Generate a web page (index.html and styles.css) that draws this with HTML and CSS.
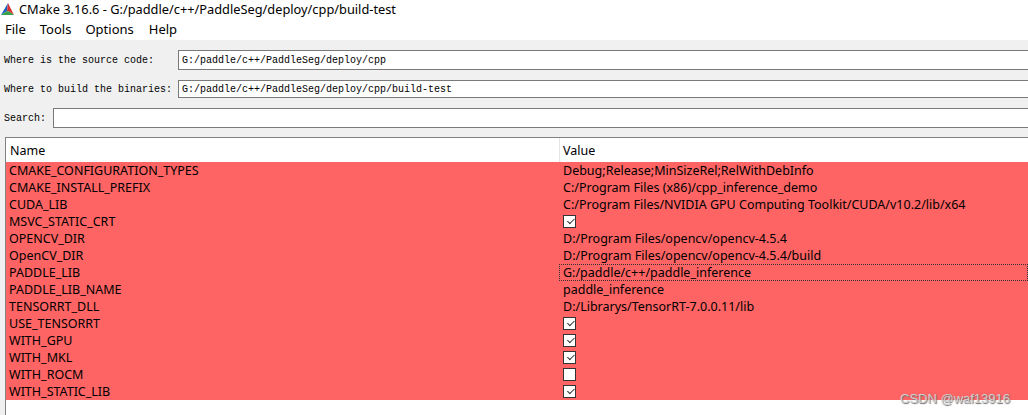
FILE: index.html
```html
<!DOCTYPE html>
<html>
<head>
<meta charset="utf-8">
<link rel="stylesheet" href="styles.css">
</head>
<body>
<div class="window">
  <div class="titlebar">
    <svg class="logo" width="14" height="13" viewBox="0 0 14 13">
      <polygon points="7,0 0,12 6,8" fill="#1f5fbf"/>
      <polygon points="7,0 6,8 9,9 13,12" fill="#d8322e"/>
      <polygon points="0,12 6,8 9,9 13,12" fill="#3aa04a"/>
    </svg>
    <span class="title">CMake 3.16.6 - G:/paddle/c++/PaddleSeg/deploy/cpp/build-test</span>
  </div>
  <div class="menubar">
    <span class="menu m-file">File</span>
    <span class="menu m-tools">Tools</span>
    <span class="menu m-options">Options</span>
    <span class="menu m-help">Help</span>
  </div>
  <div class="main">
    <div class="formrow r1">
      <span class="label">Where is the source code:</span>
      <div class="input in-path">G:/paddle/c++/PaddleSeg/deploy/cpp</div>
    </div>
    <div class="formrow r2">
      <span class="label">Where to build the binaries:</span>
      <div class="input in-path">G:/paddle/c++/PaddleSeg/deploy/cpp/build-test</div>
    </div>
    <div class="formrow r3">
      <span class="label">Search:</span>
      <div class="input in-search"></div>
    </div>
    <div class="table">
      <div class="thead">
        <div class="cname">Name</div>
        <div class="cval hval">Value</div>
      </div>
      <div class="tbody">
        <div class="row"><div class="cname">CMAKE_CONFIGURATION_TYPES</div><div class="cval">Debug;Release;MinSizeRel;RelWithDebInfo</div></div>
        <div class="row"><div class="cname">CMAKE_INSTALL_PREFIX</div><div class="cval">C:/Program Files (x86)/cpp_inference_demo</div></div>
        <div class="row"><div class="cname">CUDA_LIB</div><div class="cval">C:/Program Files/NVIDIA GPU Computing Toolkit/CUDA/v10.2/lib/x64</div></div>
        <div class="row"><div class="cname">MSVC_STATIC_CRT</div><div class="cval"><span class="cb on"></span></div></div>
        <div class="row"><div class="cname">OPENCV_DIR</div><div class="cval">D:/Program Files/opencv/opencv-4.5.4</div></div>
        <div class="row"><div class="cname">OpenCV_DIR</div><div class="cval">D:/Program Files/opencv/opencv-4.5.4/build</div></div>
        <div class="row"><div class="cname">PADDLE_LIB</div><div class="cval focus">G:/paddle/c++/paddle_inference</div></div>
        <div class="row"><div class="cname">PADDLE_LIB_NAME</div><div class="cval">paddle_inference</div></div>
        <div class="row"><div class="cname">TENSORRT_DLL</div><div class="cval">D:/Librarys/TensorRT-7.0.0.11/lib</div></div>
        <div class="row"><div class="cname">USE_TENSORRT</div><div class="cval"><span class="cb on"></span></div></div>
        <div class="row"><div class="cname">WITH_GPU</div><div class="cval"><span class="cb on"></span></div></div>
        <div class="row"><div class="cname">WITH_MKL</div><div class="cval"><span class="cb on"></span></div></div>
        <div class="row"><div class="cname">WITH_ROCM</div><div class="cval"><span class="cb"></span></div></div>
        <div class="row"><div class="cname">WITH_STATIC_LIB</div><div class="cval"><span class="cb on"></span></div></div>
      </div>
    </div>
  </div>
  <div class="watermark">CSDN @waf13916</div>
</div>
</body>
</html>
```
FILE: styles.css
```css
html, body {
  margin: 0;
  padding: 0;
}
body {
  width: 1028px;
  height: 415px;
  overflow: hidden;
  background: #f0f0f0;
  font-family: "Noto Sans", "Liberation Sans", sans-serif;
  color: #000;
}
.window {
  position: relative;
  width: 1028px;
  height: 415px;
  overflow: hidden;
  display: flex;
  flex-direction: column;
}
.titlebar {
  height: 18px;
  background: #fff;
  display: flex;
  align-items: center;
  padding-left: 1px;
}
.logo {
  display: block;
  flex: none;
}
.title {
  margin-left: 4px;
  font-size: 12.8px;
  line-height: 18px;
  white-space: nowrap;
}
.menubar {
  height: 22px;
  background: #fff;
  display: flex;
  align-items: center;
  font-size: 13px;
  padding-left: 5px;
}
.menu {
  line-height: 22px;
}
.m-tools { margin-left: 14px; }
.m-options { margin-left: 14px; }
.m-help { margin-left: 15px; }
.main {
  flex: 1;
  background: #f0f0f0;
  padding-top: 10px;
  display: flex;
  flex-direction: column;
}
.formrow {
  display: flex;
  align-items: center;
  padding-left: 4px;
  font-family: "Liberation Mono", "DejaVu Sans Mono", monospace;
  font-size: 10px;
}
.r1 { height: 20px; }
.r2 { height: 18px; margin-top: 10px; }
.r3 { height: 20px; margin-top: 10px; }
.label {
  white-space: nowrap;
}
.input {
  box-sizing: border-box;
  height: 100%;
  background: #fff;
  border: 1px solid #7a7a7a;
  border-right: none;
  flex: 1;
  display: flex;
  align-items: center;
  padding-left: 3px;
  white-space: nowrap;
}
.r1 .input { margin-left: 24px; }
.r2 .input { margin-left: 6px; }
.r3 .input { margin-left: 7px; }
.table {
  margin-top: 9px;
  margin-left: 5px;
  flex: 1;
  background: #fff;
  border-top: 1px solid #828282;
  border-left: 1px solid #828282;
  font-size: 12.5px;
}
.thead {
  height: 24px;
  display: flex;
  align-items: center;
  background: #fff;
}
.cname {
  width: 553px;
  flex: none;
  box-sizing: border-box;
  padding-left: 3px;
  white-space: nowrap;
}
.cval {
  flex: 1;
  box-sizing: border-box;
  padding-left: 3px;
  white-space: nowrap;
  display: flex;
  align-items: center;
  height: 100%;
}
.hval {
  border-left: 1px solid #e5e5e5;
  padding-left: 3px;
}
.thead .cname {
  padding-left: 4px;
}
.row {
  height: 17px;
  display: flex;
  align-items: center;
  background: #ff6464;
  line-height: 17px;
}
.row .cval {
  padding-left: 4px;
}
.focus {
  outline: 1px dotted #333;
  outline-offset: -1px;
}
.cb {
  display: block;
  width: 11px;
  height: 11px;
  border: 1px solid #333;
  background: #fff;
  position: relative;
}
.cb.on::after {
  content: "";
  position: absolute;
  left: 2px;
  top: 1px;
  width: 6px;
  height: 3px;
  border-left: 1.5px solid #333;
  border-bottom: 1.5px solid #333;
  transform: rotate(-45deg) translate(0px, 2px);
}
.watermark {
  position: absolute;
  left: 900px;
  top: 391px;
  font-family: "Liberation Sans", Arial, sans-serif;
  font-size: 13px;
  color: #cfcfcf;
  text-shadow: 1px 1px 1px #6e6e6e;
}
```
